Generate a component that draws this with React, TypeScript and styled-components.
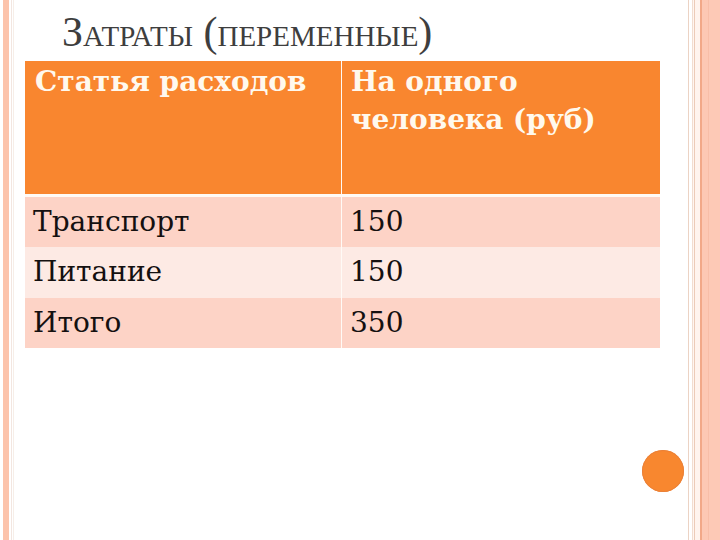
import React from "react";
import styled, { createGlobalStyle } from "styled-components";

const Global = createGlobalStyle`
  html, body { margin: 0; padding: 0; background: #ffffff; }
  #root { width: 720px; height: 540px; }
`;

const Slide = styled.div`
  width: 720px;
  height: 540px;
  display: flex;
  background: #ffffff;
  overflow: hidden;
`;

const LeftEdge = styled.div`
  width: 14px;
  flex: none;
  background: linear-gradient(
    to right,
    #ffffff 0 3px,
    #fcc3ab 3px 9px,
    #ffffff 9px 11px,
    #f3e6e0 11px 12px,
    #ffffff 12px 13px,
    #f6eee8 13px 14px
  );
`;

const RightEdge = styled.div`
  width: 34px;
  flex: none;
  background: linear-gradient(
    to right,
    #ffffff 0 2px,
    #ecd3c4 2px 3px,
    #ffffff 3px 6px,
    #f2ddd0 6px 7px,
    #fff6f0 7px 8px,
    #eccbb8 8px 9px,
    #fff4ee 9px 14px,
    #f2a888 14px 16px,
    #fdc8b4 16px 22px,
    #f8bea8 22px 23px,
    #fdc9b6 23px 34px
  );
`;

const Main = styled.div`
  flex: 1;
  display: flex;
  flex-direction: column;
`;

const Title = styled.h1`
  margin: 9px 0 0 48px;
  font-family: "Liberation Serif", "Times New Roman", serif;
  font-weight: normal;
  font-size: 42px;
  line-height: 46px;
  font-variant: small-caps;
  color: #3e3e3e;
  height: 52px;
`;

const Grid = styled.div`
  margin-left: 11px;
  width: 635px;
  display: grid;
  grid-template-columns: 316px 318px;
  column-gap: 1px;
  background: #fffaf6;
`;

const HeadCell = styled.div<{ $pad: number }>`
  background: #f9862f;
  height: 133px;
  padding: 2px 0 0 ${(p) => p.$pad}px;
  box-sizing: border-box;
  font-family: "DejaVu Serif", "Liberation Serif", serif;
  font-weight: bold;
  font-size: 28px;
  line-height: 38px;
  color: #fff9ee;
  margin-bottom: 3px;
`;

const BodyCell = styled.div<{ $shade: "dark" | "light"; $pad: number }>`
  background: ${(p) => (p.$shade === "dark" ? "#fdd3c6" : "#fdeae4")};
  height: ${(p) => (p.$shade === "dark" ? 50 : 51)}px;
  padding-left: ${(p) => p.$pad}px;
  font-family: "DejaVu Serif", "Liberation Serif", serif;
  font-size: 28px;
  line-height: 50px;
  color: #141010;
`;

const Spacer = styled.div`
  flex: 1;
`;

const Dot = styled.div`
  align-self: flex-end;
  width: 42px;
  height: 42px;
  border-radius: 50%;
  background: #f8872f;
  box-shadow: inset 0 0 0 1px #ea8038;
  margin: 0 2px 48px 0;
`;

const rows: { name: string; value: string; shade: "dark" | "light" }[] = [
  { name: "Транспорт", value: "150", shade: "dark" },
  { name: "Питание", value: "150", shade: "light" },
  { name: "Итого", value: "350", shade: "dark" },
];

export default function App() {
  return (
    <>
      <Global />
      <Slide>
        <LeftEdge />
        <Main>
          <Title>Затраты (переменные)</Title>
          <Grid>
            <HeadCell $pad={10}>Статья расходов</HeadCell>
            <HeadCell $pad={9}>
              На одного
              <br />
              человека (руб)
            </HeadCell>
            {rows.map((r) => (
              <React.Fragment key={r.name}>
                <BodyCell $shade={r.shade} $pad={8}>
                  {r.name}
                </BodyCell>
                <BodyCell $shade={r.shade} $pad={8}>
                  {r.value}
                </BodyCell>
              </React.Fragment>
            ))}
          </Grid>
          <Spacer />
          <Dot />
        </Main>
        <RightEdge />
      </Slide>
    </>
  );
}
